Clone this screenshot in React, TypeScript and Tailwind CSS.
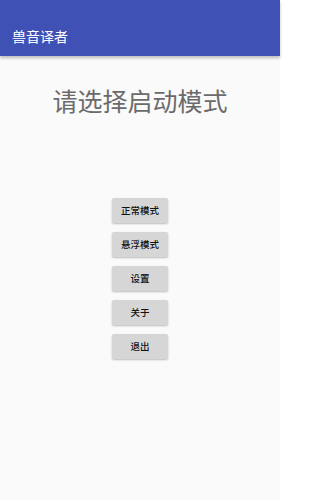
const buttons = ["正常模式", "悬浮模式", "设置", "关于", "退出"];

export default function App() {
  return (
    <div
      className="w-[280px] h-[500px] bg-[#fafafa] flex flex-col"
      style={{ fontFamily: '"Noto Sans CJK SC", "Noto Sans", sans-serif' }}
    >
      <header className="h-[56px] shrink-0 bg-[#3f51b5] flex items-center px-3 shadow-[0_2px_3px_rgba(0,0,0,0.25)]">
        <span className="text-white text-[14px] pt-[16px]">兽音译者</span>
      </header>
      <h1 className="mt-[28px] text-center text-[25px] leading-[32px] text-[#6b6b6b]">请选择启动模式</h1>
      <div className="mt-[82px] flex flex-col items-center gap-[9px]">
        {buttons.map((b) => (
          <button
            key={b}
            className="w-[56px] h-[25px] bg-[#d6d6d6] rounded-[2px] text-[9.5px] font-medium text-[#111] shadow-[0_1px_2px_rgba(0,0,0,0.25)]"
          >
            {b}
          </button>
        ))}
      </div>
    </div>
  );
}
